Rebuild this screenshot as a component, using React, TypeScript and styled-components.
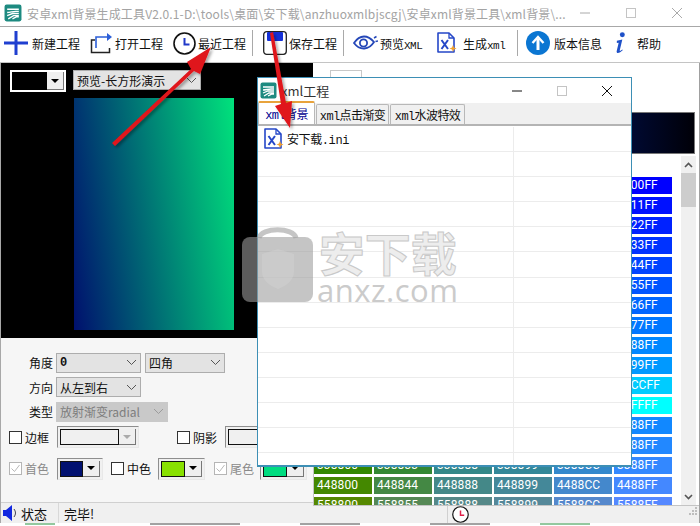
import React from "react";
import styled, { createGlobalStyle } from "styled-components";

const CJK = `"Noto Sans CJK SC", "Noto Sans", sans-serif`;
const MONO = `"Liberation Mono", "Noto Sans CJK SC", monospace`;

const Global = createGlobalStyle`
	html, body { margin: 0; padding: 0; background: #fff; }
	* { box-sizing: border-box; }
`;

const Page = styled.div`
	position: relative;
	width: 700px;
	height: 526px;
	overflow: hidden;
	display: flex;
	flex-direction: column;
	background: #fff;
	font-family: ${CJK};
	color: #111;
`;

const TitleBar = styled.div`
	height: 27px;
	flex: none;
	display: flex;
	align-items: center;
	padding-left: 4px;
	border-bottom: 1px solid #a8a8a8;
`;

const TitleText = styled.div`
	margin-left: 5px;
	width: 553px;
	flex: none;
	white-space: nowrap;
	overflow: hidden;
	font-size: 12px;
	letter-spacing: 0.15px;
	color: #a3a3a3;
`;

const WinButtons = styled.div<{ $gap: number; $color: string }>`
	display: flex;
	align-items: center;
	gap: ${p => p.$gap}px;
	color: ${p => p.$color};
`;

const Toolbar = styled.div`
	height: 36px;
	flex: none;
	display: flex;
	align-items: center;
	padding: 0 0 3px 3px;
	border-bottom: 1px solid #c4c4c4;
`;

const Tool = styled.div<{ $w: number }>`
	width: ${p => p.$w}px;
	display: flex;
	align-items: center;
	font-size: 12px;
	white-space: nowrap;
`;

const ToolLabel = styled.span<{ $ml?: number }>`
	margin-left: ${p => p.$ml || 0}px;
`;

const IconSlot = styled.div<{ $w: number }>`
	width: ${p => p.$w}px;
	flex: none;
	display: flex;
	justify-content: center;
	align-items: center;
`;

const ToolSep = styled.div<{ $mr: number }>`
	width: 1px;
	height: 26px;
	background: #a9a9a9;
	margin-right: ${p => p.$mr}px;
`;

const MonoLabel = styled.span`
	font-family: ${MONO};
	font-size: 11px;
	letter-spacing: -0.5px;
`;

const Body = styled.div`
	flex: 1;
	display: flex;
	min-height: 0;
`;

const LeftColumn = styled.div`
	width: 313px;
	flex: none;
	display: flex;
	flex-direction: column;
	border-left: 1px solid #a8a8a8;
`;

const PreviewArea = styled.div`
	height: 275px;
	flex: none;
	background: #000;
	display: flex;
	flex-direction: column;
	padding: 7px 0 0 9px;
`;

const PreviewTop = styled.div`
	display: flex;
	gap: 7px;
`;

const PreviewSwatch = styled.div`
	width: 56px;
	height: 22px;
	background: #fff;
	padding: 2px;
	display: flex;
`;

const PreviewRect = styled.div`
	width: 160px;
	height: 232px;
	margin: 6px 0 0 64px;
	background: linear-gradient(82deg, #00106e 0%, #00e27c 100%);
`;

const Controls = styled.div`
	flex: 1;
	background: #f6f6f6;
	padding-top: 12px;
	display: flex;
	flex-direction: column;
`;

const Row = styled.div<{ $h: number; $pl?: number }>`
	height: ${p => p.$h}px;
	flex: none;
	display: flex;
	align-items: center;
	padding-left: ${p => p.$pl || 0}px;
`;

const RowLabel = styled.div`
	width: 55px;
	padding-right: 3px;
	text-align: right;
	font-size: 12px;
`;

const Select = styled.div<{ $w: number; $off?: boolean; $mono?: boolean; $bold?: boolean; $ml?: number }>`
	width: ${p => p.$w}px;
	height: 20px;
	margin-left: ${p => p.$ml || 0}px;
	flex: none;
	display: flex;
	align-items: center;
	justify-content: space-between;
	padding: 0 3px 0 3px;
	background: ${p => (p.$off ? "#c9c9c9" : "#e3e3e3")};
	border: 1px solid ${p => (p.$off ? "#c9c9c9" : "#adadad")};
	color: ${p => (p.$off ? "#7d7d7d" : "#111")};
	font-size: 12px;
	font-weight: ${p => (p.$bold ? 700 : 400)};
	font-family: ${p => (p.$mono ? MONO : CJK)};
	white-space: nowrap;
	overflow: hidden;
`;

const CheckLabel = styled.div<{ $w: number; $off?: boolean; $ml?: number }>`
	width: ${p => p.$w}px;
	margin-left: ${p => p.$ml || 0}px;
	flex: none;
	display: flex;
	align-items: center;
	gap: 3px;
	font-size: 12px;
	color: ${p => (p.$off ? "#8a8a8a" : "#111")};
`;

const Box = styled.div<{ $off?: boolean }>`
	width: 13px;
	height: 13px;
	flex: none;
	background: #fff;
	border: 1px solid ${p => (p.$off ? "#b5b5b5" : "#333")};
	display: flex;
	align-items: center;
	justify-content: center;
`;

const Combo = styled.div<{ $w: number; $ml?: number }>`
	width: ${p => p.$w}px;
	height: 22px;
	margin-left: ${p => p.$ml || 0}px;
	flex: none;
	display: flex;
	padding: 2px;
	background: #f0f0f0;
	border-top: 1px solid #8e8e8e;
	border-left: 1px solid #8e8e8e;
	border-right: 1px solid #e8e8e8;
	border-bottom: 1px solid #e8e8e8;
`;

const Swatch = styled.div<{ $c: string; $flat?: boolean }>`
	flex: 1;
	background: ${p => p.$c};
	border: ${p => (p.$flat ? "none" : "1px solid #111")};
`;

const ComboDrop = styled.div<{ $off?: boolean }>`
	width: 17px;
	flex: none;
	display: flex;
	align-items: center;
	justify-content: center;
	background: #efefef;
	border-right: 1px solid #777;
	border-bottom: 1px solid #777;
	color: ${p => (p.$off ? "#aaa" : "#000")};
`;

const Caret = styled.div`
	width: 0;
	height: 0;
	border-left: 4px solid transparent;
	border-right: 4px solid transparent;
	border-top: 4px solid currentColor;
`;

const StatusLeft = styled.div`
	height: 21px;
	flex: none;
	display: flex;
	align-items: center;
	background: #f0f0f0;
	border-top: 1px solid #d0d0d0;
	font-size: 13px;
`;

const StatusCell = styled.div<{ $w: number }>`
	width: ${p => p.$w}px;
	height: 100%;
	flex: none;
	display: flex;
	align-items: center;
	gap: 2px;
	padding-left: 2px;
`;

const StatusDivider = styled.div`
	width: 1px;
	height: 100%;
	background: #d8d8d8;
	margin-right: 5px;
`;

const RightColumn = styled.div`
	flex: 1;
	min-width: 0;
	display: flex;
	flex-direction: column;
	border-right: 1px solid #a0a0a0;
`;

const RightTop = styled.div`
	height: 93px;
	flex: none;
	padding: 7px 0 0 17px;
`;

const TinyBox = styled.div`
	width: 32px;
	height: 41px;
	border: 1px solid #c8c8c8;
`;

const GradientBar = styled.div`
	width: 365px;
	height: 42px;
	margin-top: 1px;
	border: 1px solid #777;
	background: linear-gradient(90deg, #00106e 0%, #001050 70%, #000008 100%);
`;

const GridArea = styled.div`
	height: 350px;
	flex: none;
	display: flex;
	border-left: 1px solid #c4c4c4;
	border-bottom: 1px solid #c4c4c4;
	background: #fff;
`;

const Cells = styled.div`
	width: 367px;
	flex: none;
	overflow: hidden;
	padding-top: 21px;
`;

const CellRow = styled.div`
	display: flex;
	gap: 2px;
	margin-bottom: 3px;
`;

const Cell = styled.div<{ $c: string }>`
	width: 58px;
	height: 17px;
	flex: none;
	background: ${p => p.$c};
	color: #fff;
	font-family: Roboto, sans-serif;
	font-size: 12px;
	letter-spacing: 0.1px;
	line-height: 17px;
	padding-left: 3px;
`;

const ScrollBar = styled.div`
	width: 15px;
	flex: none;
	background: #f0f0f0;
	display: flex;
	flex-direction: column;
	align-items: center;
	justify-content: space-between;
	position: relative;
`;

const ScrollArrow = styled.div`
	height: 17px;
	display: flex;
	align-items: center;
	justify-content: center;
`;

const ScrollThumb = styled.div`
	position: absolute;
	top: 17px;
	left: 0;
	width: 15px;
	height: 34px;
	background: #cdcdcd;
`;

const StatusRight = styled.div`
	flex: 1;
	position: relative;
	display: flex;
	align-items: center;
	background: #f0f0f0;
	padding-left: 134px;
`;

const ClockCell = styled.div`
	height: 100%;
	border-left: 1px solid #d0d0d0;
	padding-left: 4px;
	display: flex;
	align-items: center;
`;

const Grip = styled.div`
	position: absolute;
	right: 1px;
	bottom: 2px;
`;

const CutOff = styled.div`
	height: 3px;
	flex: none;
	display: flex;
	background: #fff;
`;

const CutMark = styled.div<{ $w: number; $ml: number; $c: string }>`
	width: ${p => p.$w}px;
	margin-left: ${p => p.$ml}px;
	height: 2px;
	background: ${p => p.$c};
	opacity: 0.55;
`;

const Dialog = styled.div`
	position: absolute;
	left: 257px;
	top: 77px;
	width: 375px;
	height: 390px;
	display: flex;
	flex-direction: column;
	background: #fff;
	border: 1px solid #3d8fb5;
	border-bottom-width: 2px;
`;

const DialogTitle = styled.div`
	height: 25px;
	flex: none;
	display: flex;
	align-items: center;
	padding-left: 2px;
	font-size: 13px;
	color: #333;
`;

const DialogName = styled.div`
	margin-left: 4px;
	width: 231px;
	flex: none;
`;

const TabStrip = styled.div`
	height: 23px;
	flex: none;
	display: flex;
	align-items: flex-end;
	gap: 1px;
	background: #f0f0f0;
	border-bottom: 2px solid #b4b4b4;
`;

const Tab = styled.div<{ $w: number; $on?: boolean }>`
	width: ${p => p.$w}px;
	height: ${p => (p.$on ? 23 : 20)}px;
	flex: none;
	display: flex;
	align-items: center;
	justify-content: center;
	font-family: ${MONO};
	font-size: 12px;
	letter-spacing: -0.6px;
	white-space: nowrap;
	color: ${p => (p.$on ? "#000090" : "#111")};
	background: ${p => (p.$on ? "#fff" : "#f0f0f0")};
	border: 1px solid #b8b8b8;
	border-bottom: none;
	border-top: ${p => (p.$on ? "2px solid #e8a33c" : "1px solid #b8b8b8")};
	border-radius: 2px 2px 0 0;
`;

const FileList = styled.div`
	flex: 1;
	display: flex;
	flex-direction: column;
	overflow: hidden;
	padding-top: 1px;
`;

const FileRow = styled.div`
	height: 25.1px;
	flex: none;
	display: flex;
	align-items: center;
	border-bottom: 1px solid #ececec;
`;

const NameCol = styled.div`
	width: 256px;
	height: 100%;
	flex: none;
	display: flex;
	align-items: center;
	gap: 3px;
	padding-left: 6px;
	font-family: ${MONO};
	font-size: 12px;
	letter-spacing: -0.4px;
	border-right: 1px solid #ececec;
`;

const Watermark = styled.div`
	position: absolute;
	left: 242px;
	top: 222px;
	display: flex;
	gap: 4px;
	pointer-events: none;
`;

const WatermarkWords = styled.div`
	display: flex;
	flex-direction: column;
	align-items: center;
	padding-top: 4px;
`;

const WatermarkCn = styled.div`
	font-size: 46px;
	line-height: 50px;
	font-weight: 700;
	color: #ededed;
	-webkit-text-stroke: 1px #c9c9c9;
`;

const WatermarkEn = styled.div`
	font-family: "Open Sans", sans-serif;
	font-size: 31px;
	line-height: 28px;
	color: #cbcbcb;
	letter-spacing: 0.5px;
`;

const ArrowLayer = styled.svg`
	position: absolute;
	left: 0;
	top: 0;
	pointer-events: none;
`;

const ChevronSvg = styled.svg`
	flex: none;
`;

const AppLogo = ({ size = 17 }: { size?: number }) => (
	<svg width={size} height={size} viewBox="0 0 17 17">
		<rect x="0.5" y="0.5" width="16" height="16" rx="2" fill="#1d8a80" />
		<path d="M3 5h11M3 8c3 0 5-1 8-1h3M3 11l5-2 6 0M4 14l5-3h5M8 14l4-2h2" stroke="#fff" strokeWidth="1.3" fill="none" />
	</svg>
);

const MinIcon = () => (
	<svg width="10" height="10" viewBox="0 0 10 10"><path d="M0 5h10" stroke="currentColor" strokeWidth="1" /></svg>
);
const MaxIcon = () => (
	<svg width="10" height="10" viewBox="0 0 10 10"><rect x="0.5" y="0.5" width="9" height="9" fill="none" stroke="#c4c4c4" /></svg>
);
const CloseIcon = () => (
	<svg width="10" height="10" viewBox="0 0 10 10"><path d="M0 0l10 10M10 0L0 10" stroke="currentColor" strokeWidth="1" /></svg>
);

const PlusIcon = () => (
	<svg width="24" height="24" viewBox="0 0 24 24"><path d="M12 0v24M0 12h24" stroke="#1f3fd0" strokeWidth="3" /></svg>
);
const OpenIcon = () => (
	<svg width="23" height="22" viewBox="0 0 23 22">
		<path d="M5 8H1.500v12.500h18V16" stroke="#222" strokeWidth="1.5" fill="none" />
		<path d="M6 16V5h13" stroke="#2c5fd8" strokeWidth="1.6" fill="none" />
		<path d="M17 1l5 4-5 4z" fill="#2c5fd8" />
	</svg>
);
const ClockIcon = ({ hand = "#2038c8", size = 23 }: { hand?: string; size?: number }) => (
	<svg width={size} height={size} viewBox="0 0 23 23">
		<circle cx="11.5" cy="11.5" r="10.5" fill="#fff" stroke="#111" strokeWidth="1.6" />
		<path d="M11.500 6v6.500h5" stroke={hand} strokeWidth="2" fill="none" />
	</svg>
);
const SaveIcon = () => (
	<svg width="24" height="24" viewBox="0 0 24 24">
		<rect x="0.7" y="0.7" width="22.6" height="22.6" rx="3" fill="#fff" stroke="#222" strokeWidth="1.3" />
		<rect x="4" y="1" width="16" height="9" rx="1" fill="#1530d8" />
	</svg>
);
const EyeIcon = () => (
	<svg width="25" height="16" viewBox="0 0 25 16">
		<path d="M1 8c6-9 14-8 20-1-5 8-14 9-20 1z" fill="none" stroke="#2547b8" strokeWidth="1.8" />
		<circle cx="10.5" cy="8" r="3.6" fill="none" stroke="#2547b8" strokeWidth="1.8" />
		<path d="M21 3l2.500-1.500M22.500 6.500L25 6" stroke="#2547b8" strokeWidth="1.5" />
	</svg>
);
const XmlFileIcon = () => (
	<svg width="20" height="22" viewBox="0 0 20 22">
		<path d="M1 1h11l5 5v14H1z" fill="#fff" stroke="#2547c8" strokeWidth="1.6" strokeLinejoin="round" />
		<path d="M12 1v5h5" fill="none" stroke="#2547c8" strokeWidth="1.3" />
		<path d="M4.500 8l6.500 9M11 8l-6.500 9" stroke="#2547c8" strokeWidth="2" />
		<path d="M16 13l1 2.500 2.500 1-2.500 1-1 2.500-1-2.500-2.500-1 2.500-1z" fill="#f0a030" />
	</svg>
);
const UpIcon = () => (
	<svg width="24" height="24" viewBox="0 0 24 24">
		<circle cx="12" cy="12" r="12" fill="#0b76d2" />
		<path d="M12 19V8" stroke="#fff" strokeWidth="3" />
		<path d="M6.500 12L12 6l5.500 6" stroke="#fff" strokeWidth="2.4" fill="none" />
	</svg>
);
const InfoIcon = () => (
	<svg width="12" height="24" viewBox="0 0 12 24">
		<circle cx="8" cy="3" r="2.700" fill="#1e50c8" />
		<path d="M2 9.500l6-1.200L5.200 20c-.2 1 .6 1 2.800-.8l.4.700c-3 3-7 4.200-6.600 1L4 11.600l-2 .3z" fill="#1e50c8" />
	</svg>
);
const Speaker = () => (
	<svg width="16" height="18" viewBox="0 0 16 18">
		<path d="M0 6h3l6-5v16l-6-5H0z" fill="#1228e0" />
		<path d="M11 5c2 2.500 2 5.500 0 8" stroke="#445" strokeWidth="1" fill="none" />
	</svg>
);
const Chevron = ({ off }: { off?: boolean }) => (
	<ChevronSvg width="11" height="7" viewBox="0 0 11 7">
		<path d="M1 1l4.500 4.500L10 1" stroke={off ? "#9b9b9b" : "#555"} fill="none" />
	</ChevronSvg>
);
const CheckMark = () => (
	<svg width="11" height="11" viewBox="0 0 11 11"><path d="M1.500 5.500l3 3 5-6.500" stroke="#b8b8b8" fill="none" /></svg>
);

const hex = (r: number, g: number, b: number) =>
	[r, g, b].map(v => v.toString(16).padStart(2, "0").toUpperCase()).join("");

// palette rows: the first twelve sweep green, the rest sweep red at G=88
const greens = [0, 0x11, 0x22, 0x33, 0x44, 0x55, 0x66, 0x77, 0x88, 0x99, 0xcc, 0xff];
const reds = [0x11, 0x22, 0x33, 0x44, 0x55];
const paletteRows = [
	...greens.map(g => [0, 0x44, 0x88, 0x99, 0xcc, 0xff].map(b => hex(0, g, b))),
	...reds.map(r => [0, r, 0x88, 0x99, 0xcc, 0xff].map(b => hex(r, 0x88, b))),
];

const Arrows = () => (
	<ArrowLayer width="700" height="526" viewBox="0 0 700 526">
		<defs>
			<filter id="arrowShadow" x="-20%" y="-20%" width="140%" height="140%">
				<feDropShadow dx="2" dy="2" stdDeviation="1.5" floodColor="#000" floodOpacity="0.35" />
			</filter>
		</defs>
		<g filter="url(#arrowShadow)" fill="#e0141a">
			<path d="M112 143L191 69l-4-7 24-15-11 27-6-3-79 75z" />
			<path d="M270 33l3-1 13 71 6-2-2 27-15-22 6-2-11-71z" />
		</g>
	</ArrowLayer>
);

export default function App() {
	return (
		<Page>
			<Global />
			<TitleBar>
				<AppLogo size={18} />
				<TitleText>安卓xml背景生成工具V2.0.1-D:\tools\桌面\安下载\anzhuoxmlbjscgj\安卓xml背景工具\xml背景\...</TitleText>
				<WinButtons $gap={36} $color="#aaa">
					<MinIcon />
					<MaxIcon />
					<CloseIcon />
				</WinButtons>
			</TitleBar>
			<Toolbar>
				<Tool $w={85}><IconSlot $w={26}><PlusIcon /></IconSlot><ToolLabel $ml={3}>新建工程</ToolLabel></Tool>
				<Tool $w={83}><IconSlot $w={26}><OpenIcon /></IconSlot><ToolLabel $ml={1}>打开工程</ToolLabel></Tool>
				<Tool $w={81}><IconSlot $w={26}><ClockIcon /></IconSlot><ToolLabel $ml={1}>最近工程</ToolLabel></Tool>
				<ToolSep $mr={8} />
				<Tool $w={82}><IconSlot $w={27}><SaveIcon /></IconSlot><ToolLabel $ml={1}>保存工程</ToolLabel></Tool>
				<ToolSep $mr={8} />
				<Tool $w={85}><IconSlot $w={27}><EyeIcon /></IconSlot><ToolLabel $ml={1}>预览<MonoLabel>XML</MonoLabel></ToolLabel></Tool>
				<Tool $w={80}><IconSlot $w={20}><XmlFileIcon /></IconSlot><ToolLabel $ml={6}>生成<MonoLabel>xml</MonoLabel></ToolLabel></Tool>
				<ToolSep $mr={8} />
				<Tool $w={89}><IconSlot $w={24}><UpIcon /></IconSlot><ToolLabel $ml={4}>版本信息</ToolLabel></Tool>
				<Tool $w={48}><IconSlot $w={11}><InfoIcon /></IconSlot><ToolLabel $ml={11}>帮助</ToolLabel></Tool>
			</Toolbar>
			<Body>
				<LeftColumn>
					<PreviewArea>
						<PreviewTop>
							<PreviewSwatch>
								<Swatch $c="#000" $flat />
								<ComboDrop><Caret /></ComboDrop>
							</PreviewSwatch>
							<Select $w={128}>预览-长方形演示<Chevron /></Select>
						</PreviewTop>
						<PreviewRect />
					</PreviewArea>
					<Controls>
						<Row $h={25}>
							<RowLabel>角度</RowLabel>
							<Select $w={85} $mono $bold>0<Chevron /></Select>
							<Select $w={80} $ml={4}>四角<Chevron /></Select>
						</Row>
						<Row $h={24}>
							<RowLabel>方向</RowLabel>
							<Select $w={85}>从左到右<Chevron /></Select>
						</Row>
						<Row $h={25}>
							<RowLabel>类型</RowLabel>
							<Select $w={112} $off>放射渐变radial<Chevron off /></Select>
						</Row>
						<Row $h={26} $pl={8}>
							<CheckLabel $w={48}><Box />边框</CheckLabel>
							<Combo $w={82}>
								<Swatch $c="#f0f0f0" />
								<ComboDrop $off><Caret /></ComboDrop>
							</Combo>
							<CheckLabel $w={48} $ml={38}><Box />阴影</CheckLabel>
							<Combo $w={82}>
								<Swatch $c="#f0f0f0" />
								<ComboDrop $off><Caret /></ComboDrop>
							</Combo>
						</Row>
						<Row $h={37} $pl={8}>
							<CheckLabel $w={48} $off><Box $off><CheckMark /></Box>首色</CheckLabel>
							<Combo $w={46}>
								<Swatch $c="#001070" />
								<ComboDrop><Caret /></ComboDrop>
							</Combo>
							<CheckLabel $w={47} $ml={8}><Box />中色</CheckLabel>
							<Combo $w={47}>
								<Swatch $c="#88e000" />
								<ComboDrop><Caret /></ComboDrop>
							</Combo>
							<CheckLabel $w={46} $ml={9} $off><Box $off><CheckMark /></Box>尾色</CheckLabel>
							<Combo $w={47}>
								<Swatch $c="#00dc80" />
								<ComboDrop><Caret /></ComboDrop>
							</Combo>
						</Row>
					</Controls>
					<StatusLeft>
						<StatusCell $w={57}><Speaker />状态</StatusCell>
						<StatusDivider />
						完毕!
					</StatusLeft>
				</LeftColumn>
				<RightColumn>
					<RightTop>
						<TinyBox />
						<GradientBar />
					</RightTop>
					<GridArea>
						<Cells>
							{paletteRows.map(row => (
								<CellRow key={row[0]}>
									{row.map(c => <Cell key={c} $c={`#${c}`}>{c}</Cell>)}
								</CellRow>
							))}
						</Cells>
						<ScrollBar>
							<ScrollArrow><svg width="9" height="6" viewBox="0 0 9 6"><path d="M1 5l3.500-3.500L8 5" stroke="#555" strokeWidth="1.6" fill="none" /></svg></ScrollArrow>
							<ScrollThumb />
							<ScrollArrow><svg width="9" height="6" viewBox="0 0 9 6"><path d="M1 1l3.500 3.500L8 1" stroke="#555" strokeWidth="1.6" fill="none" /></svg></ScrollArrow>
						</ScrollBar>
					</GridArea>
					<StatusRight>
						<ClockCell><ClockIcon hand="#e0204a" size={17} /></ClockCell>
						<Grip>
							<svg width="10" height="10" viewBox="0 0 10 10" fill="#bdbdbd">
								<rect x="7" y="1" width="2" height="2" /><rect x="4" y="4" width="2" height="2" /><rect x="7" y="4" width="2" height="2" />
								<rect x="1" y="7" width="2" height="2" /><rect x="4" y="7" width="2" height="2" /><rect x="7" y="7" width="2" height="2" />
							</svg>
						</Grip>
					</StatusRight>
				</RightColumn>
			</Body>
			<CutOff>
				<CutMark $w={30} $ml={25} $c="#3a9a50" />
				<CutMark $w={90} $ml={95} $c="#555" />
				<CutMark $w={60} $ml={60} $c="#555" />
				<CutMark $w={60} $ml={70} $c="#555" />
				<CutMark $w={50} $ml={50} $c="#3a9a50" />
			</CutOff>
			<Dialog>
				<DialogTitle>
					<AppLogo />
					<DialogName>xml工程</DialogName>
					<WinButtons $gap={35} $color="#111">
						<MinIcon />
						<MaxIcon />
						<CloseIcon />
					</WinButtons>
				</DialogTitle>
				<TabStrip>
					<Tab $w={57} $on>xml背景</Tab>
					<Tab $w={73}>xml点击渐变</Tab>
					<Tab $w={75}>xml水波特效</Tab>
				</TabStrip>
				<FileList>
					<FileRow>
						<NameCol><XmlFileIcon />安下载.ini</NameCol>
					</FileRow>
					{Array.from({ length: 13 }, (_, i) => (
						<FileRow key={i}><NameCol /></FileRow>
					))}
				</FileList>
			</Dialog>
			<Watermark>
				<svg width="71" height="80" viewBox="0 0 71 80">
					<path d="M17 16C19 5 52 5 54 16" fill="none" stroke="rgba(156,156,156,.59)" strokeWidth="5" />
					<rect x="0" y="15" width="71" height="65" rx="8" fill="rgba(156,156,156,.59)" />
					<path d="M20 32l16-5 16 5v18c0 8-8 14-16 17-8-3-16-9-16-17z" fill="rgba(210,210,210,.5)" />
				</svg>
				<WatermarkWords>
					<WatermarkCn>安下载</WatermarkCn>
					<WatermarkEn>anxz.com</WatermarkEn>
				</WatermarkWords>
			</Watermark>
			<Arrows />
		</Page>
	);
}
